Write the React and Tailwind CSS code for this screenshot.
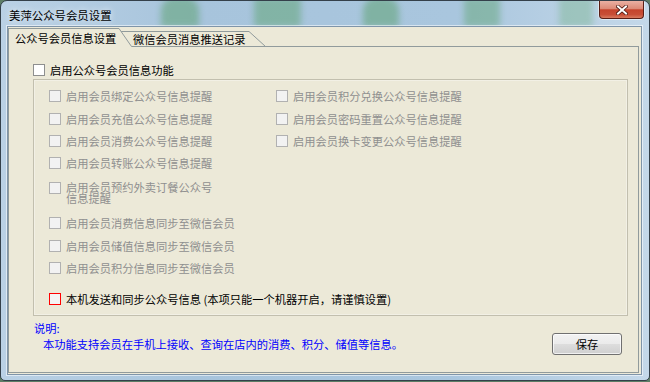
import React from "react";

const Box = ({ variant }) => {
  let cls = "border-[#b1b1b1] bg-[#f2f2f2]";
  if (variant === "enabled") cls = "border-[#8e8f8f] bg-white";
  if (variant === "red") cls = "border-[#ff0000] bg-[#f4f4f4]";
  return <div className={"w-[12px] h-[12px] border shrink-0 " + cls} />;
};

const Row = ({ text }) => (
  <div className="h-[22.4px] flex items-center gap-[5px]">
    <Box />
    <span className="text-[#8f8f8f] leading-[14px] whitespace-nowrap">{text}</span>
  </div>
);

export default function App() {
  return (
    <div className="w-[650px] h-[382px] bg-[#5d7d66] overflow-hidden font-['Noto_Sans_CJK_SC','Noto_Sans',sans-serif] text-[11.25px] text-black">
      <div className="relative w-[650px] h-[381px] rounded-t-[7px] rounded-b-[5px] border border-[#34404a] bg-[linear-gradient(90deg,#bad1e5_0%,#a7c4dc_30%,#a9c6de_70%,#c4d8e9_100%)] flex flex-col overflow-hidden">
        {/* background blur seen through glass */}
        <div className="absolute left-[160px] top-[-4px] w-[38px] h-[30px] rounded-t-[14px] bg-[#66a67d] opacity-60 blur-[3px]" />
        <div className="absolute left-[253px] top-[-4px] w-[47px] h-[30px] rounded-[4px] bg-[#6aa982] opacity-60 blur-[3px]" />
        <div className="absolute left-[362px] top-[-4px] w-[36px] h-[30px] rounded-t-[14px] bg-[#66a67d] opacity-60 blur-[3px]" />
        <div className="absolute left-[463px] top-[-4px] w-[36px] h-[30px] rounded-[3px] bg-[#6aa982] opacity-55 blur-[3px]" />
        <div className="absolute left-[558px] top-[-4px] w-[34px] h-[30px] rounded-[3px] bg-[#7ab48f] opacity-45 blur-[3px]" />

        {/* title bar */}
        <div className="relative h-[25px] pl-[8px] pt-[6px] leading-[16px] text-[11.4px] [text-shadow:0_0_6px_rgba(255,255,255,0.95)]">
          美萍公众号会员设置
        </div>

        {/* close button */}
        <div className="absolute top-0 right-[5px] w-[45px] h-[18px] rounded-b-[4px] border border-t-0 border-[#5a1d15] bg-[linear-gradient(180deg,#eab0a3_0%,#dc8a77_45%,#c5432c_52%,#c84e36_80%,#d97a5f_100%)] flex items-center justify-center shadow-[0_0_0_1px_rgba(255,255,255,0.45)]">
          <svg width="12" height="10" viewBox="0 0 12 10">
            <path d="M2 1.5 L10 8.5 M10 1.5 L2 8.5" stroke="#4a1710" strokeWidth="3.6" strokeLinecap="square" />
            <path d="M2 1.5 L10 8.5 M10 1.5 L2 8.5" stroke="#ffffff" strokeWidth="2" strokeLinecap="square" />
          </svg>
        </div>

        {/* client area */}
        <div className="relative ml-[6px] mr-[7px] mb-[5px] flex-1 border border-[#7f95a9] bg-[#ece9d8] shadow-[0_0_0_1px_rgba(255,255,255,0.55)] flex flex-col pt-[1px] pr-[2px] pb-[1px]">
          {/* tab strip */}
          <div className="flex h-[19px] shrink-0">
            <div className="w-[111px] h-[19px] border-l border-t border-[#919b9c] bg-[#ece9d8] pl-[6px] pt-[1px] leading-[16px]">
              公众号会员信息设置
            </div>
            <svg width="13" height="19" viewBox="0 0 13 19" className="shrink-0">
              <path d="M0 0.5 L12.5 18.5 L13 18.5" fill="none" stroke="#919b9c" strokeWidth="1" />
              <path d="M2.1 3.5 L13 3.5" fill="none" stroke="#919b9c" strokeWidth="1" />
            </svg>
            <div className="w-[114px] h-[19px] flex flex-col">
              <div className="h-[3px]" />
              <div className="flex-1 border-t border-b border-[#919b9c] pl-[1px] leading-[14px]">
                微信会员消息推送记录
              </div>
            </div>
            <svg width="20" height="19" viewBox="0 0 20 19" className="shrink-0">
              <path d="M0 3.5 L3 3.5 L19.5 18.5" fill="none" stroke="#919b9c" strokeWidth="1" />
              <path d="M0 18.5 L20 18.5" fill="none" stroke="#919b9c" strokeWidth="1" />
            </svg>
            <div className="flex-1 border-b border-[#919b9c]" />
          </div>

          {/* tab panel */}
          <div className="flex-1 border-l border-r border-b border-[#919b9c] flex flex-col">
            <div className="ml-[24px] mt-[17px] h-[12px] flex items-center gap-[5px]">
              <Box variant="enabled" />
              <span className="leading-[14px] whitespace-nowrap">启用公众号会员信息功能</span>
            </div>

            {/* group box */}
            <div className="ml-[24px] mt-[3px] w-[595px] h-[237px] border border-[#c2bfae] shadow-[inset_0_0_0_1px_rgba(255,255,255,0.35)] pl-[15px] pt-[5px] flex flex-col">
              <div className="flex">
                <div className="w-[227px] flex flex-col">
                  <Row text="启用会员绑定公众号信息提醒" />
                  <Row text="启用会员充值公众号信息提醒" />
                  <Row text="启用会员消费公众号信息提醒" />
                  <Row text="启用会员转账公众号信息提醒" />
                  <div className="h-[37.4px] flex items-start gap-[5px]">
                    <div className="mt-[7px]">
                      <Box />
                    </div>
                    <span className="mt-[7px] text-[#8f8f8f] leading-[11px] whitespace-nowrap">
                      启用会员预约外卖订餐公众号
                      <br />
                      信息提醒
                    </span>
                  </div>
                  <Row text="启用会员消费信息同步至微信会员" />
                  <Row text="启用会员储值信息同步至微信会员" />
                  <Row text="启用会员积分信息同步至微信会员" />
                </div>
                <div className="flex flex-col">
                  <Row text="启用会员积分兑换公众号信息提醒" />
                  <Row text="启用会员密码重置公众号信息提醒" />
                  <Row text="启用会员换卡变更公众号信息提醒" />
                </div>
              </div>
              <div className="mt-[8.6px] h-[22.4px] flex items-center gap-[5px]">
                <Box variant="red" />
                <span className="leading-[14px] whitespace-nowrap">
                  本机发送和同步公众号信息 (本项只能一个机器开启，请谨慎设置)
                </span>
              </div>
            </div>

            {/* bottom */}
            <div className="flex items-start pl-[25px] pr-[16px]">
              <div className="flex-1 pt-[4px] text-[#0000ff] leading-[16px]">
                <div>说明:</div>
                <div className="pl-[9px]">本功能支持会员在手机上接收、查询在店内的消费、积分、储值等信息。</div>
              </div>
              <div className="mt-[17px] w-[70px] h-[22px] rounded-[3px] border border-[#707070] bg-[linear-gradient(180deg,#f2f2f2_0%,#ebebeb_48%,#dddddd_52%,#cfcfcf_100%)] shadow-[inset_0_0_0_1px_rgba(255,255,255,0.7)] flex items-center justify-center leading-[14px]">
                保存
              </div>
            </div>
          </div>
        </div>
      </div>
    </div>
  );
}
